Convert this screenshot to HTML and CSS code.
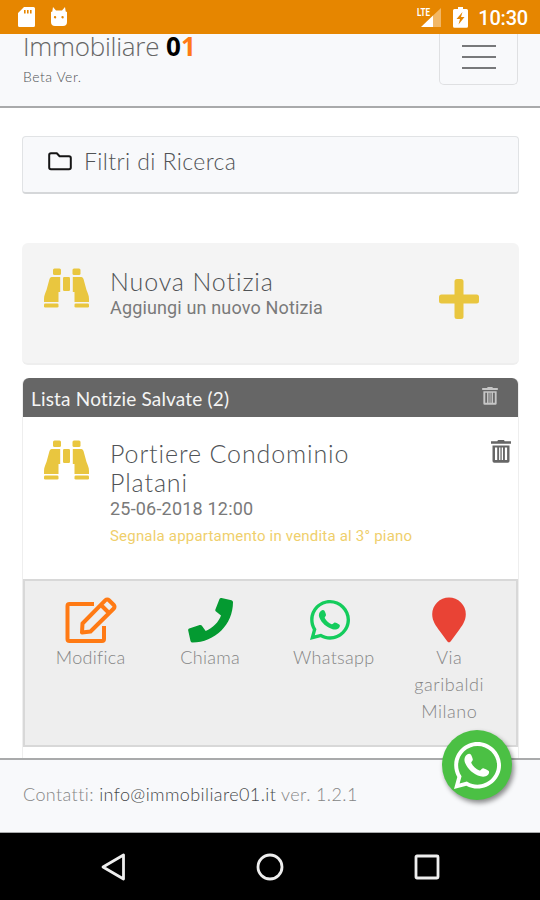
FILE: index.html
```html
<!DOCTYPE html>
<html lang="it">
<head>
    <meta charset="UTF-8">
    <meta name="viewport" content="width=device-width, initial-scale=1.0">
    <link rel="stylesheet" href="styles.css">
    <title>Immobiliare 01</title>
</head>
<body>

    <!-- shared icons -->
    <svg class="icon-defs" width="0" height="0">
        <symbol id="binoculars" viewBox="0 0 45 40">
            <rect x="9" y="0.5" width="8" height="6.5" rx="1.5"/>
            <rect x="28.5" y="0.5" width="8" height="6.5" rx="1.5"/>
            <path d="M7.500 9h8.700v15h-1.700v10H0v-3c0-4 1.500-6 2.500-9L5.500 11a2.500 2.500 0 0 1 2-2z"/>
            <path d="M37.500 9h-8.700v15h1.700v10H45v-3c0-4-1.500-6-2.500-9L39.500 11a2.500 2.500 0 0 0-2-2z"/>
            <rect x="19" y="9" width="7" height="14" rx="1.2"/>
            <rect x="0" y="35.4" width="14.5" height="4.2" rx="1.3"/>
            <rect x="30.5" y="35.4" width="14.5" height="4.2" rx="1.3"/>
        </symbol>
        <symbol id="trash" viewBox="0 0 20 23">
            <path d="M7 0h6l.7 1.2H20v2.6H0V1.2h6.3z"/>
            <path fill-rule="evenodd" d="M1.5 5.5h17V21a1.7 1.7 0 0 1-1.7 1.7H3.2A1.7 1.7 0 0 1 1.5 21zM4 7.500v12.500h2.200V7.500zM8.100 7.500v12.500h1.300V7.500zM10.700 7.500v12.500H12V7.500zM13.900 7.500v12.500h2.200V7.500z"/>
        </symbol>
        <symbol id="whatsapp" viewBox="0 32 448 448">
            <path d="M380.9 97.1C339 55.1 283.2 32 223.9 32c-122.4 0-222 99.6-222 222 0 39.1 10.2 77.3 29.6 111L0 480l117.7-30.9c32.4 17.7 68.900 27 106.100 27h.1c122.3 0 224.1-99.6 224.1-222 0-59.3-25.2-115-67.1-157zm-157 341.6c-33.2 0-65.7-8.9-94-25.7l-6.7-4-69.8 18.3L72 359.2l-4.4-7c-18.5-29.4-28.2-63.3-28.2-98.2 0-101.7 82.8-184.5 184.6-184.5 49.3 0 95.6 19.2 130.4 54.1 34.8 34.9 56.2 81.2 56.1 130.5 0 101.8-84.9 184.6-186.6 184.6z"/>
            <path d="M125 151c12-9 31-8 37 2 7 12 15 32 17 43 3 15-18 27-14 37 17 32 45 58 78 71 11 3 24-22 36-21 14 3 36 14 49 23 12 8 6 30-6 41-17 16-45 20-69 12-70-21-123-68-148-130-12-29-4-61 20-78z"/>
        </symbol>
    </svg>

    <div class="status-bar">
        <div class="status-left">
            <svg width="17" height="20" viewBox="0 0 17 20"><path fill="#fff" fill-rule="evenodd" d="M6 0h9.500A1.500 1.500 0 0 1 17 1.500v17a1.500 1.500 0 0 1-1.500 1.500h-14A1.500 1.500 0 0 1 0 18.500V6zM6 3v3.500h1.600V3zM9 3v3.500h1.600V3zM12 3v3.500h1.600V3z"/></svg>
            <svg width="18" height="20" viewBox="0 0 18 20"><path fill="#fff" fill-rule="evenodd" d="M3 0L6 3.500h6L15 0l.7 4.500L17 5v10a4 4 0 0 1-4 4H5a4 4 0 0 1-4-4V5l1.300-.5zM5 9a1.200 1.200 0 1 0 .1 2.400A1.200 1.200 0 0 0 5 9zM12.500 9a1.200 1.200 0 1 0 .1 2.400A1.200 1.200 0 0 0 12.500 9z"/></svg>
        </div>
        <div class="status-right">
            <svg class="signal" width="26" height="21" viewBox="0 0 26 21">
                <path fill="#f2b765" d="M17 8.500L25 1v19h-8z"/>
                <path fill="#fff" d="M5 20L17 8.500V20z"/>
                <text class="lte" x="1" y="9" textLength="13" lengthAdjust="spacingAndGlyphs">LTE</text>
            </svg>
            <svg class="battery" width="15" height="21" viewBox="0 0 15 21"><path fill="#fff" fill-rule="evenodd" d="M5 0h5v2h3.500A1.500 1.500 0 0 1 15 3.500v15.800a1.500 1.500 0 0 1-1.500 1.500h-12A1.500 1.500 0 0 1 0 19.300V3.500A1.500 1.500 0 0 1 1.500 2H5zM9.500 5L3.500 12H7l-1.500 5.500L11.500 10H8z"/></svg>
            <span class="clock">10:30</span>
        </div>
    </div>

    <header class="navbar">
        <div class="brand">
            <div class="brand-name"><span class="brand-word">Immobiliare</span> <b>0<span class="one">1</span></b></div>
            <div class="brand-ver">Beta Ver.</div>
        </div>
        <button class="toggler" type="button"><i></i><i></i><i></i></button>
    </header>

    <main class="content">
        <div class="filters">
            <svg width="24" height="19" viewBox="0 0 24 19"><path fill="none" stroke="#151515" stroke-width="2" stroke-linejoin="round" d="M3 1.200h5.800l2.800 3H21a1.800 1.800 0 0 1 1.800 1.800v9.500a1.800 1.800 0 0 1-1.800 1.800H3a1.800 1.800 0 0 1-1.800-1.800V3A1.800 1.800 0 0 1 3 1.200z"/></svg>
            <span>Filtri di Ricerca</span>
        </div>

        <div class="new-card">
            <svg class="binoculars"><use href="#binoculars"/></svg>
            <div class="card-text">
                <div class="card-title">Nuova Notizia</div>
                <div class="card-sub">Aggiungi un nuovo Notizia</div>
            </div>
            <svg class="plus" width="40" height="40" viewBox="0 0 40 40">
                <rect x="15.500" y="0" width="9" height="40" rx="2.500"/>
                <rect x="0" y="15.500" width="40" height="9" rx="2.500"/>
            </svg>
        </div>

        <div class="list">
            <div class="list-header">
                <span>Lista Notizie Salvate (2)</span>
                <svg class="trash-small"><use href="#trash"/></svg>
            </div>
            <div class="item">
                <svg class="binoculars"><use href="#binoculars"/></svg>
                <div class="card-text">
                    <div class="card-title">Portiere Condominio Platani</div>
                    <div class="card-sub date">25-06-2018 12:00</div>
                    <div class="note">Segnala appartamento in vendita al 3° piano</div>
                </div>
                <svg class="trash"><use href="#trash"/></svg>
            </div>
            <div class="actions">
                <div class="action">
                    <svg width="52" height="46" viewBox="0 0 52 46" fill="none" stroke="#ff7a14" stroke-width="4" stroke-linejoin="round">
                        <path d="M29 7H4.500A2 2 0 0 0 2.500 9v33a2 2 0 0 0 2 2H37a2 2 0 0 0 2-2V29"/>
                        <path d="M17.500 26.500L40.500 3.200a2.500 2.500 0 0 1 3.500 0l4.800 4.800a2.500 2.500 0 0 1 0 3.500L25.500 34.500 17 35.500zM36 8l8 8"/>
                    </svg>
                    <span>Modifica</span>
                </div>
                <div class="action">
                    <svg width="45" height="45" viewBox="0 0 45 45"><path fill="#049a31" d="M33.500.5l10 2.300q1.500.4 1.500 2C45 27 27 45 4.500 45q-1.500 0-2-1.500L.2 33q-.3-1.500 1-2l10.500-3.500q1.200-.4 2 .5l4 5.500C24.500 31 31 24 33 18l-5-4q-1-.8-.6-2L31.500 1.500q.6-1.300 2-1z"/></svg>
                    <span>Chiama</span>
                </div>
                <div class="action wa">
                    <svg width="40" height="40" fill="#14cc5c"><use href="#whatsapp"/></svg>
                    <span>Whatsapp</span>
                </div>
                <div class="action">
                    <svg width="34" height="46" viewBox="0 0 34 46"><path fill="#e94335" d="M17 0.500a16.800 16.800 0 0 1 16.800 16.800c0 7-4 12-7.500 16.700L18.600 44.600a2 2 0 0 1-3.200 0L7.700 34C4.200 29.300.2 24.300.2 17.300A16.800 16.800 0 0 1 17 .5z"/></svg>
                    <span>Via garibaldi Milano</span>
                </div>
            </div>
        </div>
    </main>

    <footer class="footer">
        <span>Contatti: <a>info@immobiliare01.it</a> ver. 1.2.1</span>
        <div class="fab"><svg width="47" height="47" fill="#fff"><use href="#whatsapp"/></svg></div>
    </footer>

    <div class="android-nav">
        <svg width="26" height="28" viewBox="0 0 26 28"><path d="M23.500 2v24L3 14z"/></svg>
        <svg width="28" height="28" viewBox="0 0 28 28"><circle cx="14" cy="14" r="12"/></svg>
        <svg width="26" height="26" viewBox="0 0 26 26"><rect x="2" y="2" width="22" height="22" rx="1"/></svg>
    </div>

</body>
</html>
```

FILE: styles.css
```css
* {
    box-sizing: border-box;
}

body {
    margin: 0;
    width: 540px;
    height: 900px;
    display: flex;
    flex-direction: column;
    overflow: hidden;
    background: #fff;
    color: #505356;
    font-family: Lato, "Liberation Sans", sans-serif;
    font-weight: 300;
}

svg {
    display: block;
    flex-shrink: 0;
}

.icon-defs {
    position: absolute;
}

/* status bar */
.status-bar {
    flex: 0 0 34px;
    display: flex;
    justify-content: space-between;
    padding: 7px 12px 0 18px;
    background: #e68600;
}

.status-left, .status-right {
    display: flex;
}

.status-left {
    gap: 15px;
}

.lte {
    fill: #fff;
    font: 700 10px Roboto, sans-serif;
}

.battery {
    margin: 0 10px 0 11px;
}

.clock {
    color: #fff;
    font: 500 20px/23px Roboto, sans-serif;
    letter-spacing: -0.2px;
}

/* top navbar */
.navbar {
    flex: 0 0 74px;
    display: flex;
    justify-content: space-between;
    align-items: flex-start;
    padding: 0 22px 0 23px;
    background: #f8f9fb;
    border-bottom: 2px solid #a9aaab;
}

.brand-name {
    font: 300 26px/24px "Open Sans", sans-serif;
    white-space: nowrap;
    color: #666;
}

.brand-word {
    letter-spacing: -0.25px;
}

.brand-name b {
    font-family: "Noto Sans", sans-serif;
    font-weight: 700;
    color: #000;
}

.brand-name .one {
    color: #ff7a14;
}

.brand-ver {
    margin-top: 10px;
    font-size: 14px;
    line-height: 18px;
    letter-spacing: 0.5px;
}

.toggler {
    width: 79px;
    height: 51px;
    margin: 0;
    padding: 0 0 5px;
    display: flex;
    flex-direction: column;
    align-items: center;
    justify-content: center;
    gap: 9px;
    background: none;
    border: 1px solid #dfe0e2;
    border-top: 0;
    border-radius: 0 0 5px 5px;
}

.toggler i {
    width: 34px;
    height: 2px;
    background: #77787a;
}

/* page content */
.content {
    flex: 1;
    overflow: hidden;
    padding: 28px 21px 0 22px;
}

.filters {
    height: 58px;
    display: flex;
    gap: 12px;
    padding: 15px 24px 0 25px;
    background: #f8f9fb;
    border: 1px solid #e1e3e5;
    border-bottom: 2px solid #d5d7d9;
    border-radius: 4px;
    font-size: 23px;
    line-height: 19px;
    letter-spacing: 0.4px;
}

.new-card {
    height: 122px;
    margin-top: 49px;
    display: flex;
    padding: 25px 40px 0 22px;
    background: #f4f4f4;
    border-radius: 6px;
    border-bottom: 2px solid #eee;
}

.binoculars {
    width: 45px;
    height: 40px;
    fill: #e9c63f;
}

.card-text {
    flex: 1;
    margin-top: -1px;
    padding-left: 21px;
}

.card-title {
    font-size: 25px;
    line-height: 29px;
    letter-spacing: 0.88px;
}

.card-sub {
    font: 400 18px/23px Roboto, sans-serif;
    letter-spacing: 0.15px;
    color: #7a7a7a;
}

.new-card .plus {
    margin-top: 11px;
    fill: #e9c63f;
}

.list {
    margin-top: 13px;
    border: 1px solid #eee;
    border-top: 0;
    border-radius: 6px;
    height: 500px;
}

.list-header {
    height: 39px;
    display: flex;
    justify-content: space-between;
    padding: 9px 20px 0 8px;
    background: #666;
    border-radius: 6px 6px 0 0;
    color: #f4f4f4;
    font-size: 19px;
    font-weight: 400;
    line-height: 24px;
    letter-spacing: 0.18px;
}

.trash-small {
    width: 16px;
    height: 18px;
    fill: #c6c6c6;
}

.item {
    height: 162px;
    display: flex;
    padding: 23px 7px 0 21px;
}

.item .card-text {
    padding-right: 60px;
}

.date {
    letter-spacing: 0.2px;
}

.note {
    margin-top: 5px;
    font: 400 15px/23px Roboto, sans-serif;
    letter-spacing: 0.2px;
    color: #efcf6c;
    white-space: nowrap;
}

.trash {
    width: 20px;
    height: 23px;
    fill: #666;
}

.actions {
    height: 168px;
    display: grid;
    grid-template-columns: repeat(4, 119.5px);
    padding: 16px 0 0 6px;
    background: #eee;
    border: 2px solid #d8d8d8;
}

.action {
    display: flex;
    flex-direction: column;
    align-items: center;
    padding: 0 21px;
    font-size: 18px;
    line-height: 27px;
    letter-spacing: 0.3px;
    text-align: center;
    color: #858585;
}

.action svg {
    height: 46px;
    margin-bottom: 1px;
}

.action.wa svg {
    height: 40px;
    margin: 3px 0 4px;
}

.action.wa span {
    padding-left: 8px;
}

.action:last-child {
    letter-spacing: 0.55px;
}

/* contact footer */
.footer {
    flex: 0 0 75px;
    display: flex;
    justify-content: space-between;
    padding: 0 28px 0 23px;
    background: #f8f9fb;
    border-top: 2px solid #a9aaab;
    border-bottom: 1px solid #a9aaab;
    font-size: 18px;
    line-height: 69px;
    letter-spacing: 0.4px;
    color: #858585;
}

.footer a {
    color: #45484a;
}

.fab {
    width: 70px;
    height: 70px;
    margin-top: -30px;
    display: flex;
    align-items: center;
    justify-content: center;
    position: relative;
    z-index: 2;
    border-radius: 50%;
    background: #4bc044;
    box-shadow: 2px 3px 5px rgba(0, 0, 0, 0.45);
}

/* android buttons */
.android-nav {
    flex: 0 0 67px;
    display: flex;
    align-items: center;
    justify-content: space-between;
    padding: 0 100px;
    background: #000;
}

.android-nav svg {
    fill: none;
    stroke: #eee;
    stroke-width: 2.8;
    stroke-linejoin: round;
}
```
